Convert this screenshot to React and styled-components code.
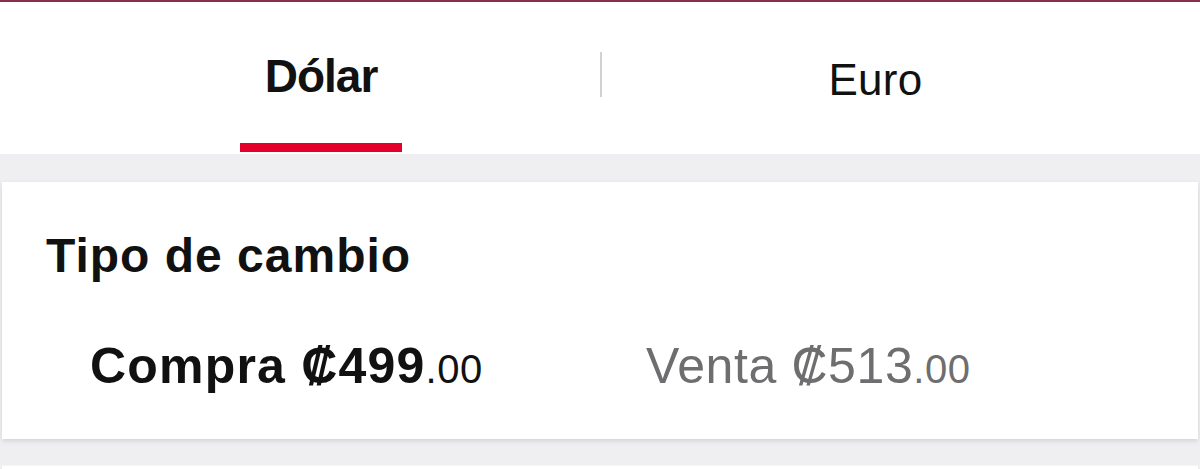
import styled, { createGlobalStyle } from "styled-components";

const GlobalStyle = createGlobalStyle`
  html, body {
    margin: 0;
    padding: 0;
    background: #efeff1;
    font-family: "Liberation Sans", Arial, sans-serif;
    color: #111;
  }
`;

const Page = styled.div`
  width: 1200px;
  min-height: 469px;
  background: #efeff1;
  border-top: 2px solid #8a2d4f;
`;

const Tabs = styled.div`
  display: grid;
  grid-template-columns: 558px 2px 547px;
  padding-left: 42px;
  height: 152px;
  background: #fff;
`;

const Tab = styled.div`
  display: flex;
  flex-direction: column;
  align-items: center;
  justify-content: space-between;
  padding-top: ${(p) => (p.$active ? "51px" : "56px")};
  padding-bottom: 2px;
`;

const TabLabel = styled.span`
  font-size: ${(p) => (p.$active ? "46px" : "44px")};
  font-weight: ${(p) => (p.$active ? 700 : 400)};
  letter-spacing: ${(p) => (p.$active ? "-1px" : "0.3px")};
  line-height: 1;
  color: #111;
`;

const Indicator = styled.div`
  width: 162px;
  height: 9px;
  background: ${(p) => (p.$active ? "#e4002b" : "transparent")};
`;

const Divider = styled.div`
  margin-top: 50px;
  height: 45px;
  background: #d2d2d2;
`;

const Card = styled.section`
  margin: 28px 2px 0;
  background: #fff;
  box-shadow: 0 2px 5px rgba(0, 0, 0, 0.12);
  padding: 50px 44px 48px;
`;

const NextCard = styled.div`
  margin: 26px 2px 0;
  height: 80px;
  background: #fff;
  border-top: 1px solid #f6f6f8;
`;

const Title = styled.h2`
  margin: 0;
  font-size: 48px;
  font-weight: 700;
  letter-spacing: 1px;
  line-height: 1;
`;

const Rates = styled.div`
  display: grid;
  grid-template-columns: 1fr 1fr;
  margin-top: 61px;
`;

const Rate = styled.div`
  padding-left: ${(p) => (p.$strong ? "44px" : "46px")};
  font-size: 50px;
  line-height: 1;
  letter-spacing: ${(p) => (p.$strong ? "1.2px" : "0.6px")};
  font-weight: ${(p) => (p.$strong ? 700 : 400)};
  color: ${(p) => (p.$strong ? "#111" : "#6e6e70")};
  white-space: nowrap;
`;

const Cents = styled.span`
  font-size: 40px;
  font-weight: 400;
  letter-spacing: 0.5px;
`;

export default function App() {
  return (
    <>
      <GlobalStyle />
      <Page>
        <Tabs>
          <Tab $active>
            <TabLabel $active>Dólar</TabLabel>
            <Indicator $active />
          </Tab>
          <Divider />
          <Tab>
            <TabLabel>Euro</TabLabel>
            <Indicator />
          </Tab>
        </Tabs>
        <Card>
          <Title>Tipo de cambio</Title>
          <Rates>
            <Rate $strong>
              Compra ₡499<Cents>.00</Cents>
            </Rate>
            <Rate>
              Venta ₡513<Cents>.00</Cents>
            </Rate>
          </Rates>
        </Card>
        <NextCard />
      </Page>
    </>
  );
}
